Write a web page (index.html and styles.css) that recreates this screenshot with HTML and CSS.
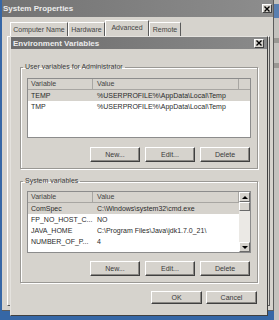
FILE: index.html
```html
<!DOCTYPE html>
<html lang="en">
    <head>
        <meta charset="utf-8">
        <title>System Properties</title>
        <link rel="stylesheet" href="styles.css">
    </head>
    <body>
        <div class="desktop">
            <div class="window sysprops">
                <div class="titlebar">
                    <span>System Properties</span>
                    <span class="close"><svg width="6" height="6" viewBox="0 0 6 6"><path d="M0.5 0.5L5.5 5.5M5.5 0.5L0.5 5.5" stroke="#000" stroke-width="1.4"/></svg></span>
                </div>
                <div class="tabs">
                    <div class="tab name">Computer Name</div>
                    <div class="tab hardware">Hardware</div>
                    <div class="tab advanced active">Advanced</div>
                    <div class="tab remote">Remote</div>
                </div>
                <div class="page"></div>
            </div>

            <div class="window envvars">
                <div class="titlebar">
                    <span>Environment Variables</span>
                    <span class="close"><svg width="6" height="6" viewBox="0 0 6 6"><path d="M0.5 0.5L5.5 5.5M5.5 0.5L0.5 5.5" stroke="#000" stroke-width="1.4"/></svg></span>
                </div>
                <div class="content">
                    <fieldset class="group user">
                        <legend>User variables for Administrator</legend>
                        <div class="list">
                            <div class="list-main">
                                <div class="row head">
                                    <div class="col var">Variable</div>
                                    <div class="col val">Value</div>
                                    <div class="col fill"></div>
                                </div>
                                <div class="row selected">
                                    <div class="col var">TEMP</div>
                                    <div class="col val">%USERPROFILE%\AppData\Local\Temp</div>
                                </div>
                                <div class="row">
                                    <div class="col var">TMP</div>
                                    <div class="col val">%USERPROFILE%\AppData\Local\Temp</div>
                                </div>
                            </div>
                        </div>
                        <div class="buttons">
                            <div class="button">New...</div>
                            <div class="button">Edit...</div>
                            <div class="button">Delete</div>
                        </div>
                    </fieldset>

                    <fieldset class="group system">
                        <legend>System variables</legend>
                        <div class="list">
                            <div class="list-main">
                                <div class="row head">
                                    <div class="col var">Variable</div>
                                    <div class="col val">Value</div>
                                </div>
                                <div class="row selected">
                                    <div class="col var">ComSpec</div>
                                    <div class="col val">C:\Windows\system32\cmd.exe</div>
                                </div>
                                <div class="row">
                                    <div class="col var">FP_NO_HOST_C...</div>
                                    <div class="col val">NO</div>
                                </div>
                                <div class="row">
                                    <div class="col var">JAVA_HOME</div>
                                    <div class="col val">C:\Program Files\Java\jdk1.7.0_21\</div>
                                </div>
                                <div class="row">
                                    <div class="col var">NUMBER_OF_P...</div>
                                    <div class="col val">4</div>
                                </div>
                            </div>
                            <div class="scrollbar">
                                <div class="arrow up"></div>
                                <div class="thumb"></div>
                                <div class="track"></div>
                                <div class="arrow down"></div>
                            </div>
                        </div>
                        <div class="buttons">
                            <div class="button">New...</div>
                            <div class="button">Edit...</div>
                            <div class="button">Delete</div>
                        </div>
                    </fieldset>

                    <div class="buttons dialog">
                        <div class="button">OK</div>
                        <div class="button">Cancel</div>
                    </div>
                </div>
            </div>

            <div class="strip">
                <div class="strip-blue"></div>
                <div class="strip-box"></div>
                <div class="strip-box"></div>
            </div>
        </div>
    </body>
</html>
```

FILE: styles.css
```css
body {
    margin: 0;
    background-color: #3667a6;
    font-family: "Liberation Sans", Arial, sans-serif;
    font-size: 7px;
    color: #2a2a2a;
}

.desktop {
    position: relative;
    width: 279px;
    height: 320px;
    overflow: hidden;
}

.window {
    position: absolute;
    box-sizing: border-box;
    background-color: #d6d3cd;
}

.titlebar {
    display: flex;
    align-items: center;
    justify-content: space-between;
    background: linear-gradient(to right, #737373, #8d8d8d);
    color: #ececec;
    font-weight: bold;
    font-size: 8px;
}

.close {
    display: flex;
    align-items: center;
    justify-content: center;
    box-sizing: border-box;
    width: 10px;
    height: 9px;
    background-color: #d6d3cd;
    border: 1px solid;
    border-color: #fff #404040 #404040 #fff;
}

/* system properties */

.sysprops {
    left: 2px;
    top: 0;
    width: 272px;
    height: 311px;
    border-right: 1px solid #5c5c5c;
    border-bottom: 1px solid #5c5c5c;
}

.sysprops .titlebar {
    height: 17px;
    padding: 0 1px 0 1px;
}

.tabs {
    display: flex;
    align-items: flex-end;
    height: 19px;
    padding-left: 8px;
}

.tab {
    display: flex;
    align-items: center;
    justify-content: center;
    box-sizing: border-box;
    height: 14px;
    border: 1px solid;
    border-color: #fff #5a5a5a transparent #fff;
    border-bottom: none;
    color: #444;
}

.tab.name { width: 58px; }
.tab.hardware { width: 37px; }
.tab.advanced { width: 44px; }
.tab.remote { width: 32px; }

.tab.active {
    height: 17px;
    margin-bottom: -1px;
    padding-bottom: 3px;
    background-color: #d6d3cd;
    position: relative;
}

.page {
    height: 268px;
    margin: 0 3px 0 5px;
    border: 1px solid;
    border-color: #fff #5a5a5a #5a5a5a #fff;
}

/* environment variables */

.envvars {
    left: 10px;
    top: 36px;
    width: 258px;
    height: 280px;
    border: 1px solid;
    border-color: #e4e2de #404040 #404040 #e4e2de;
}

.envvars .titlebar {
    height: 12px;
    padding: 0 3px 0 2px;
    background: linear-gradient(to right, #6c6c6c, #8a8a8a);
}

.content {
    padding: 0 9px;
}

.group {
    margin: 0;
    padding: 7px 6px 6px;
    min-width: 0;
    border: 1px solid #9a9894;
    box-shadow: inset 1px 1px 0 #fff, 1px 1px 0 #fff;
}

.group legend {
    padding: 0 2px;
    margin-left: -4px;
    line-height: 8px;
    color: #3a3a3a;
}

.group.user {
    margin-top: 14px;
}

.group.system {
    margin-top: 8px;
    padding-top: 6px;
}

.list {
    display: flex;
    box-sizing: border-box;
    border: 1px solid #8c8c8c;
    background-color: #fff;
}

.user .list {
    height: 60px;
}

.system .list {
    height: 62px;
}

.list-main {
    flex: 1;
}

.row {
    display: flex;
    height: 11px;
    line-height: 11px;
    white-space: nowrap;
}

.row.head {
    background-color: #d6d3cd;
    border-bottom: 1px solid #a8a6a2;
    height: 10px;
    line-height: 10px;
    color: #444;
}

.row.selected {
    background-color: #d6d3cd;
}

.col {
    box-sizing: border-box;
    overflow: hidden;
}

.col.var {
    width: 65px;
    padding-left: 3px;
}

.col.val {
    width: 146px;
    padding-left: 4px;
}

.col.fill {
    flex: 1;
}

.head .col {
    border-right: 1px solid #a8a6a2;
}

.head .col.fill {
    border-right: none;
}

.scrollbar {
    display: flex;
    flex-direction: column;
    width: 11px;
    background-color: #ebe9e5;
}

.arrow,
.thumb {
    box-sizing: border-box;
    height: 10px;
    background-color: #d6d3cd;
    border: 1px solid;
    border-color: #fff #6a6a6a #6a6a6a #fff;
    display: flex;
    align-items: center;
    justify-content: center;
}

.thumb {
    height: 9px;
}

.track {
    flex: 1;
}

.arrow::after {
    content: "";
    width: 0;
    height: 0;
    border-left: 3px solid transparent;
    border-right: 3px solid transparent;
}

.arrow.up::after {
    border-bottom: 3px solid #000;
}

.arrow.down::after {
    border-top: 3px solid #000;
}

.buttons {
    display: flex;
    justify-content: flex-end;
    gap: 5px;
    margin-top: 9px;
    padding-right: 1px;
}

.system .buttons {
    margin-top: 8px;
}

.button {
    display: flex;
    align-items: center;
    justify-content: center;
    box-sizing: border-box;
    width: 50px;
    height: 15px;
    background-color: #d6d3cd;
    border: 1px solid;
    border-color: #fff #404040 #404040 #fff;
    box-shadow: inset -1px -1px 0 #8a8884;
    color: #3a3a3a;
}

.buttons.dialog {
    margin-top: 8px;
    gap: 4px;
    padding-right: 1px;
}

.dialog .button {
    height: 13px;
    width: 51px;
}

/* edge of the desktop */

.strip {
    position: absolute;
    left: 274px;
    top: 0;
    width: 5px;
    height: 320px;
    background-color: #c4c2be;
}

.strip-blue {
    height: 14px;
    margin-top: 4px;
    background-color: #5a7fb0;
}

.strip-box {
    height: 5px;
    margin-top: 20px;
    background-color: #9a9894;
}
```
